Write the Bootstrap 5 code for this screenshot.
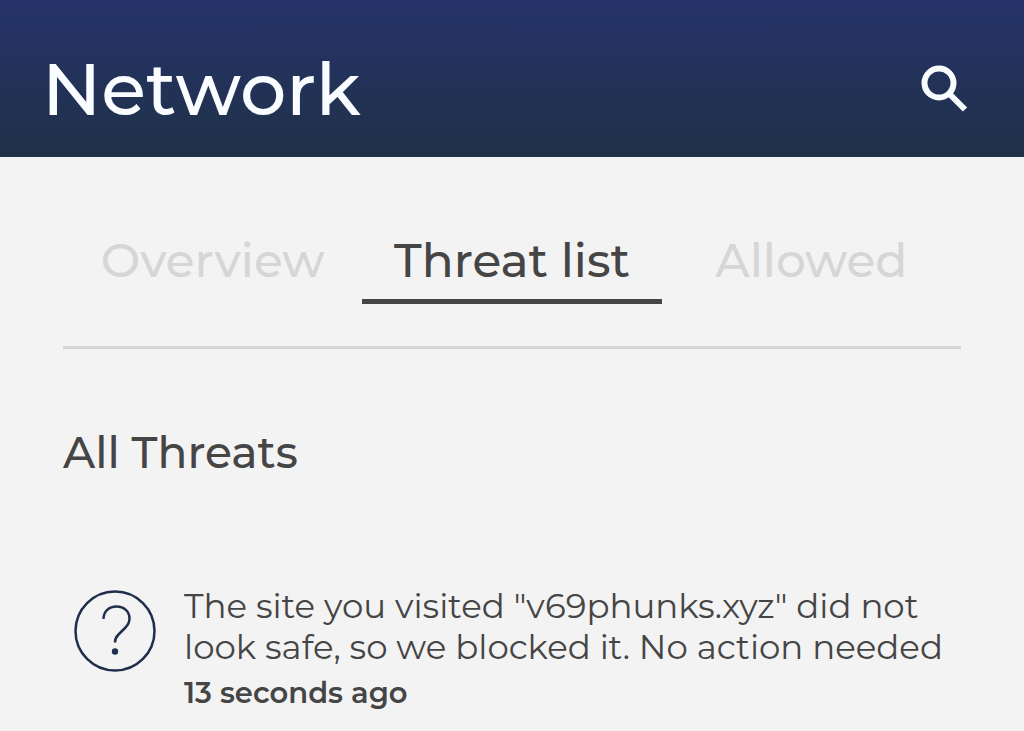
<!DOCTYPE html>
<html lang="en">
<head>
<meta charset="utf-8">
<meta name="viewport" content="width=device-width, initial-scale=1">
<title>Network</title>
<link href="https://cdn.jsdelivr.net/npm/bootstrap@5.3.0/dist/css/bootstrap.min.css" rel="stylesheet">
<style>
body{background:#f3f3f3;color:#454545;font-family:Montserrat,Inter,"Open Sans",sans-serif}
.app-header{background:linear-gradient(#25336a,#203148);padding:46px 48px 26px 42px}
.app-title{font-size:73px;line-height:85px;font-weight:500;color:#fafdff}
.icon-btn,.icon-btn:hover{color:#fafdff;padding:0 8px}
.page-body{padding:53px 63px 16px}
.tab-strip{border-bottom:3px solid #d6d6d6;padding-bottom:42px}
.tab-link{font-size:47px;line-height:56px;font-weight:500;color:#d6d6d6;padding:23px 0 10px;border-bottom:5px solid transparent;text-align:center}
.tab-link:hover,.tab-link:focus{color:#a0a0a0}
.tab-link.active{color:#454545;border-color:#454545}
.section-title{font-size:44px;line-height:54px;font-weight:500;margin:76px 0 107px}
.threat-item{gap:28px;padding-left:11px}
.threat-icon{color:#1f2f4b;margin-top:4px}
.threat-text{font-size:34px;line-height:41px}
.threat-time{font-size:29px;line-height:36px;font-weight:600;margin-top:7px}
</style>
</head>
<body>
<header class="app-header d-flex justify-content-between align-items-center">
<h1 class="app-title m-0">Network</h1>
<button class="btn icon-btn border-0" type="button" aria-label="Search">
<svg width="48" height="48" viewBox="0 0 48 48" fill="none" stroke="currentColor" aria-hidden="true"><circle cx="19" cy="18" r="14.5" stroke-width="6"/><path d="M29 28.500L45 44.500" stroke-width="6"/></svg>
</button>
</header>
<main class="page-body">
<nav class="nav tab-strip flex-nowrap" aria-label="Network sections">
<a class="nav-link tab-link col-4" href="#">Overview</a>
<a class="nav-link tab-link col-4 active" href="#" aria-current="page">Threat list</a>
<a class="nav-link tab-link col-4" href="#">Allowed</a>
</nav>
<h2 class="section-title">All Threats</h2>
<article class="threat-item d-flex align-items-start">
<svg class="threat-icon flex-shrink-0" width="82" height="82" viewBox="0 0 82 82" fill="none" stroke="currentColor" stroke-width="2.5" aria-hidden="true"><circle cx="41" cy="41" r="39.5"/><path d="M29.500 29C29.500 21.500 35 16.500 42.500 16.500C50 16.500 55.500 21.500 55.500 28.500C55.500 32.500 54 35 51 38L44.500 44.500C42 47 41 49 41 52.500"/><circle cx="41" cy="61.500" r="3.200" fill="currentColor" stroke="none"/></svg>
<div>
<p class="threat-text m-0">The site you visited "v69phunks.xyz" did not look safe, so we blocked it. No action needed</p>
<p class="threat-time mb-0">13 seconds ago</p>
</div>
</article>
</main>
<script src="https://cdn.jsdelivr.net/npm/bootstrap@5.3.0/dist/js/bootstrap.bundle.min.js"></script>
</body>
</html>
